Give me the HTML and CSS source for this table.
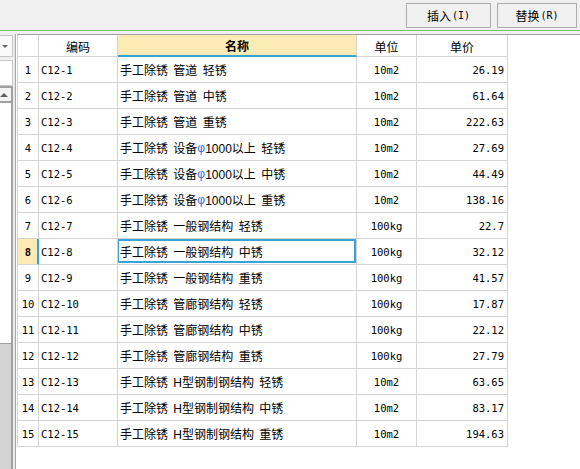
FILE: index.html
```html
<!DOCTYPE html>
<html>
<head>
<meta charset="utf-8">
<link rel="stylesheet" href="styles.css">
</head>
<body>
<div class="toolbar">
  <button class="btn btn-insert">插入<span class="key">(I)</span></button>
  <button class="btn btn-replace">替换<span class="key">(R)</span></button>
</div>
<div class="main">
  <div class="side">
    <div class="combo"><span class="caret"></span></div>
    <div class="box"></div>
    <div class="scroll">
      <div class="sbtn"><span class="uparrow"></span></div>
      <div class="track"></div>
      <div class="thumb"></div>
    </div>
  </div>
  <div class="divider"></div>
  <div class="content">
    <div class="table">
      <div class="row head">
        <div class="cell"></div>
        <div class="cell c">编码</div>
        <div class="cell c sorted">名称</div>
        <div class="cell c">单位</div>
        <div class="cell c">单价</div>
      </div>
      <div class="row"><div class="cell num">1</div><div class="cell code">C12-1</div><div class="cell name">手工除锈 管道 轻锈</div><div class="cell unit">10m2</div><div class="cell price">26.19</div></div>
      <div class="row"><div class="cell num">2</div><div class="cell code">C12-2</div><div class="cell name">手工除锈 管道 中锈</div><div class="cell unit">10m2</div><div class="cell price">61.64</div></div>
      <div class="row"><div class="cell num">3</div><div class="cell code">C12-3</div><div class="cell name">手工除锈 管道 重锈</div><div class="cell unit">10m2</div><div class="cell price">222.63</div></div>
      <div class="row"><div class="cell num">4</div><div class="cell code">C12-4</div><div class="cell name">手工除锈 设备<span class="phi">φ</span>1000以上 轻锈</div><div class="cell unit">10m2</div><div class="cell price">27.69</div></div>
      <div class="row"><div class="cell num">5</div><div class="cell code">C12-5</div><div class="cell name">手工除锈 设备<span class="phi">φ</span>1000以上 中锈</div><div class="cell unit">10m2</div><div class="cell price">44.49</div></div>
      <div class="row"><div class="cell num">6</div><div class="cell code">C12-6</div><div class="cell name">手工除锈 设备<span class="phi">φ</span>1000以上 重锈</div><div class="cell unit">10m2</div><div class="cell price">138.16</div></div>
      <div class="row"><div class="cell num">7</div><div class="cell code">C12-7</div><div class="cell name">手工除锈 一般钢结构 轻锈</div><div class="cell unit">100kg</div><div class="cell price">22.7</div></div>
      <div class="row current"><div class="cell num">8</div><div class="cell code">C12-8</div><div class="cell name focus">手工除锈 一般钢结构 中锈</div><div class="cell unit">100kg</div><div class="cell price">32.12</div></div>
      <div class="row"><div class="cell num">9</div><div class="cell code">C12-9</div><div class="cell name">手工除锈 一般钢结构 重锈</div><div class="cell unit">100kg</div><div class="cell price">41.57</div></div>
      <div class="row"><div class="cell num">10</div><div class="cell code">C12-10</div><div class="cell name">手工除锈 管廊钢结构 轻锈</div><div class="cell unit">100kg</div><div class="cell price">17.87</div></div>
      <div class="row"><div class="cell num">11</div><div class="cell code">C12-11</div><div class="cell name">手工除锈 管廊钢结构 中锈</div><div class="cell unit">100kg</div><div class="cell price">22.12</div></div>
      <div class="row"><div class="cell num">12</div><div class="cell code">C12-12</div><div class="cell name">手工除锈 管廊钢结构 重锈</div><div class="cell unit">100kg</div><div class="cell price">27.79</div></div>
      <div class="row"><div class="cell num">13</div><div class="cell code">C12-13</div><div class="cell name">手工除锈 H型钢制钢结构 轻锈</div><div class="cell unit">10m2</div><div class="cell price">63.65</div></div>
      <div class="row"><div class="cell num">14</div><div class="cell code">C12-14</div><div class="cell name">手工除锈 H型钢制钢结构 中锈</div><div class="cell unit">10m2</div><div class="cell price">83.17</div></div>
      <div class="row"><div class="cell num">15</div><div class="cell code">C12-15</div><div class="cell name">手工除锈 H型钢制钢结构 重锈</div><div class="cell unit">10m2</div><div class="cell price">194.63</div></div>
    </div>
  </div>
</div>
</body>
</html>
```
FILE: styles.css
```css
html, body {
  margin: 0;
  padding: 0;
}
body {
  width: 580px;
  height: 469px;
  overflow: hidden;
  background: #ffffff;
  font-family: "Noto Sans CJK SC", sans-serif;
  font-size: 12px;
  color: #000;
}
.toolbar {
  box-sizing: border-box;
  height: 31px;
  background: #f0f0f0;
  border-bottom: 1px solid #78c46e;
  display: flex;
  justify-content: flex-end;
  align-items: flex-start;
  gap: 6px;
  padding: 3px 3px 0 0;
}
.btn {
  box-sizing: border-box;
  height: 25px;
  border: 1px solid #adadad;
  background: #f0f0f0;
  font-family: "Noto Sans CJK SC", sans-serif;
  font-size: 12px;
  color: #000;
  padding: 0;
  display: flex;
  align-items: center;
  justify-content: center;
}
.btn-insert { width: 85px; }
.btn-replace { width: 80px; }
.key {
  font-family: "DejaVu Sans Mono", monospace;
  font-size: 10px;
  margin-left: 1px;
}
.main {
  display: flex;
  height: 438px;
  background: #f0f0f0;
  padding-top: 3px;
  box-sizing: border-box;
}
.side {
  width: 13px;
  display: flex;
  flex-direction: column;
  padding-top: 1px;
  box-sizing: border-box;
}
.combo {
  box-sizing: border-box;
  height: 22px;
  background: #fafafa;
  border: 1px solid #c4c4c4;
  border-left: none;
  display: flex;
  align-items: center;
  justify-content: center;
}
.caret {
  width: 0;
  height: 0;
  border-left: 3px solid transparent;
  border-right: 3px solid transparent;
  border-top: 3px solid #606060;
  margin-left: -2px;
}
.box {
  box-sizing: border-box;
  height: 26px;
  margin-top: 3px;
  background: #fff;
  border: 1px solid #c8c8c8;
  border-left: none;
}
.scroll {
  flex: 1;
  display: flex;
  flex-direction: column;
  border-top: 2px solid #a0a0a0;
  border-right: 2px solid #a0a0a0;
  background: #fff;
}
.sbtn {
  height: 13px;
  border-bottom: 2px solid #a0a0a0;
  background: #f4f4f4;
  display: flex;
  align-items: center;
  justify-content: center;
}
.uparrow {
  width: 0;
  height: 0;
  border-left: 4px solid transparent;
  border-right: 4px solid transparent;
  border-bottom: 4px solid #606060;
  margin-left: -3px;
}
.track {
  height: 240px;
  background: #fff;
}
.thumb {
  flex: 1;
  background: #d4d4d4;
  border-top: 1px solid #a0a0a0;
}
.divider {
  width: 4px;
  background: linear-gradient(to right, #f0f0f0 0 1px, #e4e4e4 1px 2px, #a8a8a8 2px 3px, #ffffff 3px 4px);
}
.content {
  flex: 1;
  background: #fff;
  border-top: 1px solid #a0a0a0;
}
.table {
  width: 490px;
  border-left: 1px solid #d4d4d4;
}
.row {
  display: grid;
  grid-template-columns: 21px 79px 239px 60px 91px;
  height: 26px;
}
.row.head {
  height: 22px;
}
.cell {
  box-sizing: border-box;
  border-right: 1px solid #d4d4d4;
  border-bottom: 1px solid #d4d4d4;
  display: flex;
  align-items: center;
  white-space: pre;
  overflow: hidden;
  position: relative;
}
.cell.c {
  justify-content: center;
  padding-top: 1px;
}
.cell.sorted {
  background: #fdebb6;
  font-weight: bold;
  border-bottom: 2px solid #3aa3d5;
}
.num {
  justify-content: center;
  font-family: "DejaVu Sans Mono", monospace;
  font-size: 10.5px;
}
.code {
  padding-left: 2px;
  font-family: "DejaVu Sans Mono", monospace;
  font-size: 10.5px;
}
.name {
  padding-left: 2px;
  font-family: "Liberation Sans", "Noto Sans CJK SC", sans-serif;
  font-size: 12px;
  word-spacing: 2px;
}
.phi {
  color: #2f6fd0;
}
.unit {
  justify-content: center;
  font-family: "DejaVu Sans Mono", monospace;
  font-size: 10.5px;
}
.price {
  justify-content: flex-end;
  padding-right: 3px;
  font-family: "DejaVu Sans Mono", monospace;
  font-size: 10.5px;
}
.current .num {
  background: #fdebb6;
  font-weight: bold;
  border-right: 1px solid #3aa3d5;
  box-shadow: inset -1px 0 0 #3aa3d5;
}
.focus::after {
  content: "";
  position: absolute;
  left: -1px;
  top: 0;
  right: 0;
  bottom: 1px;
  border: 2px solid #3aa3d5;
  pointer-events: none;
}
```
